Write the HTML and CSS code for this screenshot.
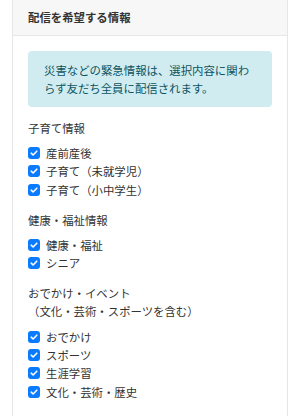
FILE: index.html
```html
<!DOCTYPE html>
<html lang="ja">
<head>
    <meta charset="UTF-8">
    <meta name="viewport" content="width=device-width, initial-scale=1.0">
    <title>配信を希望する情報</title>
    <link rel="stylesheet" href="styles.css">
</head>
<body>
    <div class="card">
        <div class="card-header">配信を希望する情報</div>
        <div class="card-body">
            <div class="alert">災害などの緊急情報は、選択内容に関わらず友だち全員に配信されます。</div>

            <div class="group">
                <div class="group-title">子育て情報</div>
                <label class="item"><span class="check"><svg viewBox="0 0 12 12"><path d="M3.2 6.2 5.1 8 8.8 4.2"/></svg></span>産前産後</label>
                <label class="item"><span class="check"><svg viewBox="0 0 12 12"><path d="M3.2 6.2 5.1 8 8.8 4.2"/></svg></span>子育て（未就学児）</label>
                <label class="item"><span class="check"><svg viewBox="0 0 12 12"><path d="M3.2 6.2 5.1 8 8.8 4.2"/></svg></span>子育て（小中学生）</label>
            </div>

            <div class="group">
                <div class="group-title">健康・福祉情報</div>
                <label class="item"><span class="check"><svg viewBox="0 0 12 12"><path d="M3.2 6.2 5.1 8 8.8 4.2"/></svg></span>健康・福祉</label>
                <label class="item"><span class="check"><svg viewBox="0 0 12 12"><path d="M3.2 6.2 5.1 8 8.8 4.2"/></svg></span>シニア</label>
            </div>

            <div class="group">
                <div class="group-title">おでかけ・イベント<br>（文化・芸術・スポーツを含む）</div>
                <label class="item"><span class="check"><svg viewBox="0 0 12 12"><path d="M3.2 6.2 5.1 8 8.8 4.2"/></svg></span>おでかけ</label>
                <label class="item"><span class="check"><svg viewBox="0 0 12 12"><path d="M3.2 6.2 5.1 8 8.8 4.2"/></svg></span>スポーツ</label>
                <label class="item"><span class="check"><svg viewBox="0 0 12 12"><path d="M3.2 6.2 5.1 8 8.8 4.2"/></svg></span>生涯学習</label>
                <label class="item"><span class="check"><svg viewBox="0 0 12 12"><path d="M3.2 6.2 5.1 8 8.8 4.2"/></svg></span>文化・芸術・歴史</label>
            </div>
        </div>
    </div>
</body>
</html>
```

FILE: styles.css
```css
body {
    margin: 0;
    background: #fff;
    color: #333;
    font-family: "Noto Sans CJK JP", "Noto Sans", sans-serif;
    font-size: 11.4px;
}
.card {
    margin: 0 12px;
    border: 1px solid #e6e6e6;
    border-top: 0;
    background: #fff;
}
.card-header {
    height: 35px;
    line-height: 35px;
    padding: 0 15px;
    background: #f7f7f7;
    border-bottom: 1px solid #e6e6e6;
    font-weight: bold;
    color: #333;
}
.card-body {
    padding: 15px 15px 20px;
}
.alert {
    background: #d1ecf1;
    color: #0c5460;
    border-radius: 4px;
    padding: 10px 16px;
    line-height: 18px;
}
.group {
    margin-top: 12px;
}
.group:first-of-type {
    margin-top: 14px;
}
.group-title {
    line-height: 18px;
    margin-bottom: 7px;
}
.item {
    display: flex;
    align-items: center;
    gap: 6px;
    height: 18.3px;
}
.check {
    width: 12px;
    height: 12px;
    border-radius: 3px;
    background: #0a7aff;
    display: flex;
}
.check svg {
    width: 12px;
    height: 12px;
    fill: none;
    stroke: #fff;
    stroke-width: 1.6;
    stroke-linecap: round;
    stroke-linejoin: round;
}
```
